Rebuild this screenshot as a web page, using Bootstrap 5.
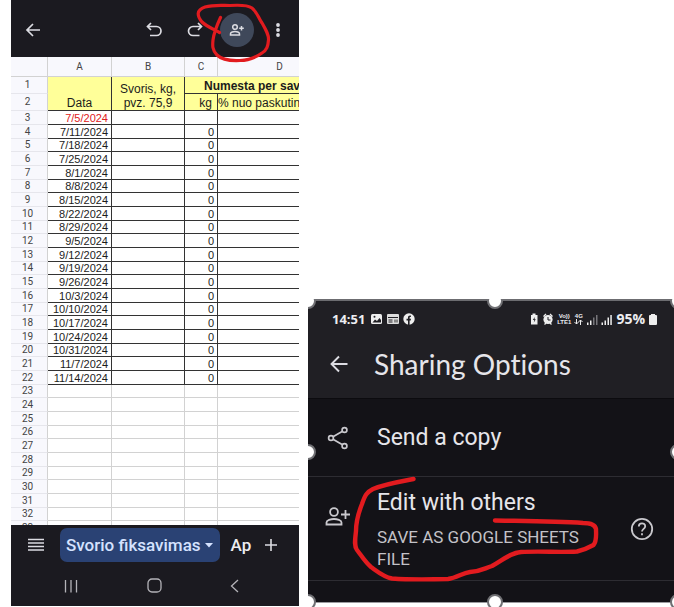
<!DOCTYPE html>
<html lang="lt">
<head>
<meta charset="utf-8">
<meta name="viewport" content="width=device-width, initial-scale=1">
<title>Svorio fiksavimas</title>
<link rel="stylesheet" href="https://cdn.jsdelivr.net/npm/bootstrap@5.3.0/dist/css/bootstrap.min.css">
<script src="https://cdn.jsdelivr.net/npm/bootstrap@5.3.0/dist/js/bootstrap.bundle.min.js"></script>
<style>
  body { background: #fff; font-family: Roboto, "Liberation Sans", sans-serif; }
  .screens { display: grid; grid-template-columns: 288fr 366fr; column-gap: 9px; padding-left: 11px; height: 100vh; min-height: 420px; overflow: hidden; }
  .screens > * { min-width: 0; }
  svg { display: block; flex: none; }
  .icon-btn { background: none; border: 0; padding: 0; color: #dcdce2; display: flex; align-items: center; justify-content: center; flex: none; }
  .phone { background: #1b1a20; min-height: 0; margin-bottom: 1px; }
  .topbar { height: 57px; flex: none; padding: 2px 14px 0 12px; }
  .round-btn { width: 34px; height: 34px; border-radius: 50%; background: #3f485a; margin: 0 17px 0 14px; }
  .ink { position: absolute; pointer-events: none; fill: none; stroke: #e21b1f; stroke-linecap: round; stroke-linejoin: round; }

  .sheet { flex: 1 1 0; min-height: 0; overflow: hidden; background: #fff; }
  .grid { table-layout: fixed; width: 331px; border-collapse: separate; border-spacing: 0; color: #1c1c1c; font: 11px/12px "Liberation Sans", Arial, sans-serif; }
  .grid th, .grid td { padding: 0 3px 0 0; height: 14px; border: 0 solid #d2d2d2; border-width: 0 1px 1px 0; text-align: right; white-space: nowrap; }
  .grid tr:nth-child(3n+2) > * { height: 13px; }
  .grid thead th { height: 20px; background: #f8f8fd; text-align: center; padding: 0; font: 10px/18px Roboto, sans-serif; color: #444; }
  .grid .rownum { background: #f8f8fd; text-align: center; padding: 0 3px 0 0; font: 10px/12px Roboto, sans-serif; color: #444; border-bottom-color: #e6e6ec; }
  .grid tr.head > * { height: 17px; }
  .grid tr.head td { background: #ffff99; border-color: #333; vertical-align: bottom; line-height: 14px; font-size: 12px; }
  .grid tr.filled td { border-color: #333; }
  .grid td.late { color: #e02020; }
  .grid .mid { text-align: center; padding: 0; }
  .grid .kg { padding-right: 5px; }
  .grid .title-cell { font-weight: 700; text-align: left; padding: 0 0 0 19px; }

  .tabs-bar { height: 40px; flex: none; padding: 0 21px 0 17px; }
  .tab-btn { height: 34px; border: 0; border-radius: 7px; background: #2a4274; color: #d5e2ff; font: 500 17px/20px Roboto, sans-serif; padding: 0 7px 0 6px; margin-left: 16px; white-space: nowrap; }
  .tab-next { border: 0; background: none; color: #ececf0; font: 500 17px/20px Roboto, sans-serif; padding: 0; margin-left: 11px; white-space: nowrap; }
  .sys-nav { height: 41px; flex: none; padding: 0 60px 0 53px; }

  .share-wrap { overflow: hidden; padding-bottom: 4px; align-self: end; }
  .share { background: #131217; border-top: 2px solid #6c6c70; border-bottom: 1px solid #9b9b9f; color: #e6e5ea; }
  .share-head { background: #201f24; height: 98px; border-bottom: 1px solid #0c0b0f; }
  .status { padding: 8px 17px 0 24px; height: 28px; color: #ededf1; }
  .status-icons { margin-left: 6px; }
  .clock { font: 700 13px/20px "Open Sans", sans-serif; }
  .charge { font: 700 14px/20px "Open Sans", sans-serif; }
  .tiny { font: 700 6px/6px "Liberation Sans", sans-serif; text-align: center; margin-left: 3px; }
  .share-title { font: 400 28px/34px Lato, sans-serif; font-variant-ligatures: none; margin: 0; }
  .title-row { padding: 18px 0 0 21px; gap: 25px; }
  .share-item { border-bottom: 1px solid #2d2c32; }
  .item-name { font: 400 23px/32px Roboto, sans-serif; }
  .item-note { font: 400 17px/22px Roboto, sans-serif; color: #c3c2c8; margin-top: 7px; }
  .item-main { background: none; border: 0; color: inherit; text-align: left; padding: 0; }
  .copy-row { height: 77px; padding-left: 19px; gap: 28px; }
  .edit-row { height: 104px; padding-right: 20px; }
  .edit-row .item-main { padding-left: 17px; gap: 26px; }
  .person { margin-top: 19px; }
  .tail { height: 21px; }
  .handle { position: absolute; width: 16px; height: 16px; margin: -8px 0 0 -8px; border-radius: 50%; background: #fff; border: 2px solid #707074; }
  .h-tl, .h-t, .h-tr { top: 0; }
  .h-l, .h-r { top: 50%; }
  .h-bl, .h-b, .h-br { top: 100%; }
  .h-tl, .h-l, .h-bl { left: 0; }
  .h-t, .h-b { left: 51%; }
  .h-tr, .h-r, .h-br { left: 101%; }
</style>
</head>
<body>
<main class="screens">
  <section class="phone d-flex flex-column position-relative" aria-label="Spreadsheet">
    <header class="topbar d-flex align-items-center">
      <button class="icon-btn" aria-label="Back"><svg width="20" height="20" viewBox="0 0 20 20" fill="none" stroke="currentColor" stroke-width="1.7"><path d="M17 10H4M10 4l-6 6 6 6"/></svg></button>
      <button class="icon-btn ms-auto" aria-label="Undo"><svg width="20" height="20" viewBox="0 0 20 20" fill="none" stroke="currentColor" stroke-width="1.7"><path d="M7 3L3.500 6.500 7 10M4 6.500h8.500a4.500 4.500 0 0 1 0 9H6"/></svg></button>
      <button class="icon-btn" aria-label="Redo"><svg width="42" height="20" viewBox="-22 0 42 20" fill="none" stroke="currentColor" stroke-width="1.700"><path d="M12 3l3.500 3.500L12 10M15 6.500H7a4.500 4.500 0 0 0 0 9h6.500"/></svg></button>
      <button class="icon-btn round-btn" aria-label="Share"><svg width="16" height="14" viewBox="0 0 16 14" fill="none" stroke="currentColor" stroke-width="1.500"><circle cx="6" cy="4" r="2.300"/><path d="M1.500 12v-1.300c0-1.500 3-2.300 4.500-2.300s4.500.8 4.500 2.300V12zM12.500 3v4.600M10.200 5.300h4.600"/></svg></button>
      <button class="icon-btn" aria-label="More"><svg width="14" height="16" viewBox="0 0 14 16" fill="currentColor"><circle cx="7" cy="3" r="1.900"/><circle cx="7" cy="8" r="1.900"/><circle cx="7" cy="13" r="1.900"/></svg></button>
    </header>
    <div class="sheet">
      <table class="grid">
        <colgroup><col style="width:37px"><col style="width:64px"><col style="width:73px"><col style="width:33px"><col style="width:124px"></colgroup>
        <thead><tr><th></th><th>A</th><th>B</th><th>C</th><th>D</th></tr></thead>
        <tbody id="rows">
          <tr class="head"><th class="rownum">1</th><td rowspan="2" class="mid">Data</td><td rowspan="2" class="mid">Svoris, kg,<br>pvz. 75,9</td><td colspan="2" class="title-cell">Numesta per sav</td></tr>
          <tr class="head"><th class="rownum">2</th><td class="kg">kg</td><td class="text-start">% nuo paskutin</td></tr>
        </tbody>
      </table>
    </div>
    <nav class="tabs-bar d-flex align-items-center" aria-label="Sheets">
      <button class="icon-btn" aria-label="All sheets"><svg width="16" height="14" viewBox="0 0 16 14" stroke="currentColor" stroke-width="1.500"><path d="M0 1.500h16M0 5h16M0 8.500h16M0 12h16"/></svg></button>
      <button class="tab-btn d-flex align-items-center gap-1">Svorio fiksavimas<svg width="8" height="5" viewBox="0 0 8 5" fill="currentColor"><path d="M0 0h8L4 4.500z"/></svg></button>
      <button class="tab-next">Ap</button>
      <button class="icon-btn ms-auto" aria-label="Add sheet"><svg width="14" height="14" viewBox="0 0 14 14" stroke="currentColor" stroke-width="1.600"><path d="M7 1v12M1 7h12"/></svg></button>
    </nav>
    <div class="sys-nav d-flex align-items-center justify-content-between">
      <button class="icon-btn" aria-label="Recents"><svg width="14" height="14" viewBox="0 0 14 14" stroke="#b4b3b8" stroke-width="1.300"><path d="M1.500 1v12.500M7 1v12.500M12.500 1v12.500"/></svg></button>
      <button class="icon-btn" aria-label="Home"><svg width="15" height="15" viewBox="0 0 15 15" fill="none" stroke="#b4b3b8" stroke-width="1.300"><rect x="1" y="1" width="13" height="13" rx="4"/></svg></button>
      <button class="icon-btn" aria-label="Back"><svg width="9" height="14" viewBox="0 0 9 14" fill="none" stroke="#b4b3b8" stroke-width="1.300"><path d="M8 1L1.500 7 8 13"/></svg></button>
    </div>
    <svg class="ink top-0 end-0" width="110" height="66" viewBox="189 0 110 66" stroke-width="3.200"><path d="M219.500 32.500C213 29 206 26 202 22C197 16 196 10 205 7C214 4.500 222 5.500 230 5.500C238 5 247 4.500 252 8C257 12 258 17 262 23C266 30 269 35 268.500 40C268 46 267 50 262 53C255 58 248 60.500 240 60.500C230 61 222 60 217 55C212 50 212.500 45 213 40C214 32 217 25 220.500 17.500"/></svg>
  </section>

  <div class="share-wrap">
    <section class="share position-relative" aria-label="Sharing Options">
      <header class="share-head">
        <div class="status d-flex align-items-center">
          <span class="clock">14:51</span>
          <svg class="status-icons" width="44" height="12" viewBox="0 0 44 12">
            <rect x="0" y="1" width="11" height="10" rx="1.500" fill="#eee"/><circle cx="3.500" cy="3.800" r="1" fill="#201f24"/><path d="M1.500 9.500l2.500-3 2 1.500 2.500-3 1.500 2v2.500z" fill="#201f24"/>
            <rect x="16" y="1" width="12" height="10" rx="1" fill="#ddd"/><path d="M17 4.500h10M17.500 7h4M17.500 9h4" stroke="#201f24"/><path d="M23 6.500h4v3h-4z" fill="#888"/>
            <circle cx="38" cy="6" r="5.700" fill="#eee"/><path d="M37 12V7.500h-1.500V5.700H37V4.600c0-1.500.9-2.300 2.900-2v1.500c-1-.1-1.300.1-1.300.8v.8h1.400l-.3 1.800h-1.100V12z" fill="#201f24"/>
          </svg>
          <svg class="ms-auto" width="24" height="12" viewBox="0 0 24 12">
            <path d="M1 2h1.500V.500h3V2H7.500v9.500H1z" fill="#eee"/><path d="M4.800 4L2.800 7h1.500L3.800 9.500l2-3.200H4.500z" fill="#201f24"/>
            <circle cx="18" cy="6.500" r="4.600" fill="#eee"/><path d="M13.500 3.500l2.500-2.500M22.500 3.500L20 1M14.500 11.500l1.500-1.500M21.500 11.500L20 10" stroke="#eee" stroke-width="1.300"/><path d="M18 4v3h2.500" stroke="#201f24" fill="none"/>
          </svg>
          <span class="tiny">Vo))<br>LTE1</span>
          <span class="tiny">4G<svg width="9" height="6" viewBox="0 0 9 6" fill="none" stroke="#eee"><path d="M2.500 0v5M.500 3l2 2 2-2M6.500 6V1M4.500 3l2-2 2 2"/></svg></span>
          <svg class="ms-1" width="25" height="11" viewBox="0 0 25 11" fill="#eee"><path d="M0 8.500h1.500V11H0zM3 6.500h1.500V11H3z"/><path d="M6 3.500h1.500V11H6zM9 1h1.500v10H9z" fill="#77767b"/><path d="M14.500 8.500H16V11h-1.500zM17.500 6.500H19V11h-1.500zM20.500 3.500H22V11h-1.500zM23.300 1h1.500v10h-1.500z"/></svg>
          <span class="charge ms-1">95%</span>
          <svg class="ms-1" width="8" height="11" viewBox="0 0 8 11" fill="#eee"><path d="M2 0h4v1h1a1 1 0 0 1 1 1v8a1 1 0 0 1-1 1H1a1 1 0 0 1-1-1V2a1 1 0 0 1 1-1h1z"/></svg>
        </div>
        <div class="title-row d-flex align-items-center">
          <button class="icon-btn" aria-label="Back"><svg width="20" height="20" viewBox="0 0 20 20" fill="none" stroke="currentColor" stroke-width="1.900"><path d="M18.500 10H3M10 2.500L2.500 10l7.500 7.500"/></svg></button>
          <h1 class="share-title">Sharing Options</h1>
        </div>
      </header>
      <div class="share-item">
        <button class="item-main d-flex align-items-center w-100 copy-row">
          <svg width="22" height="24" viewBox="0 0 22 24" fill="none" stroke="#c9c8cd" stroke-width="1.700"><circle cx="4" cy="12" r="2.400"/><circle cx="17.500" cy="4" r="2.400"/><circle cx="17.500" cy="20" r="2.400"/><path d="M6 10.800l9.500-5.600M6 13.200l9.500 5.600"/></svg>
          <span class="item-name">Send a copy</span>
        </button>
      </div>
      <div class="share-item edit-row d-flex align-items-center">
        <button class="item-main d-flex align-items-start flex-grow-1">
          <svg class="person" width="26" height="22" viewBox="0 0 26 22" fill="none" stroke="#c9c8cd" stroke-width="1.800"><circle cx="9" cy="6" r="3.900"/><path d="M1.500 18.500v-2c0-2.200 4.500-3.500 7.500-3.500s7.500 1.300 7.500 3.500v2zM20.500 4v9M16 8.500h9"/></svg>
          <span><span class="item-name d-block">Edit with others</span><span class="item-note d-block">SAVE AS GOOGLE SHEETS<br>FILE</span></span>
        </button>
        <button class="icon-btn" aria-label="Help"><svg width="24" height="24" viewBox="0 0 24 24" fill="none" stroke="#c9c8cd" stroke-width="1.800"><circle cx="12" cy="12" r="10.200"/><path d="M8.800 9.600c0-4.300 6.400-4.200 6.400-.4 0 2.600-3.200 2.700-3.200 5.400"/><path d="M12 16.300v2"/></svg></button>
      </div>
      <div class="tail"></div>
      <svg class="ink bottom-0 start-0" width="366" height="304" viewBox="308 299 366 304" stroke-width="4.400"><path d="M413.500 480C398 483 385 485 373 490C367 493 365 496 362 505C358 515 356 522 356 532C355 541 354 547 357 551C361 556 365 563 371 568C378 573 384 578 392 579.500C412 581 430 580.500 448 580C457 579 462 574 470 573C480 572.500 483 570 492 567C503 561 510 554 521 553C540 552 560 553.500 577 552.500C583 551 590 548 593.500 546C597 542 596 536 596 530C595 525 590 524 583 524C555 522 520 522 495 521.500"/></svg>
      <span class="handle h-tl"></span><span class="handle h-t"></span><span class="handle h-tr"></span>
      <span class="handle h-l"></span><span class="handle h-r"></span>
      <span class="handle h-bl"></span><span class="handle h-b"></span><span class="handle h-br"></span>
    </section>
  </div>
</main>
<script>
  const dates = ["7/5/2024","7/11/2024","7/18/2024","7/25/2024","8/1/2024","8/8/2024","8/15/2024","8/22/2024","8/29/2024","9/5/2024","9/12/2024","9/19/2024","9/26/2024","10/3/2024","10/10/2024","10/17/2024","10/24/2024","10/31/2024","11/7/2024","11/14/2024"];
  const body = document.getElementById("rows");
  for (let n = 3; n <= 33; n++) {
    const date = dates[n - 3] || "";
    body.insertAdjacentHTML("beforeend",
      `<tr class="${date ? "filled" : ""}"><th class="rownum">${n}</th><td class="${n === 3 ? "late" : ""}">${date}</td><td></td><td>${date && n > 3 ? 0 : ""}</td><td></td></tr>`);
  }
</script>
</body>
</html>
